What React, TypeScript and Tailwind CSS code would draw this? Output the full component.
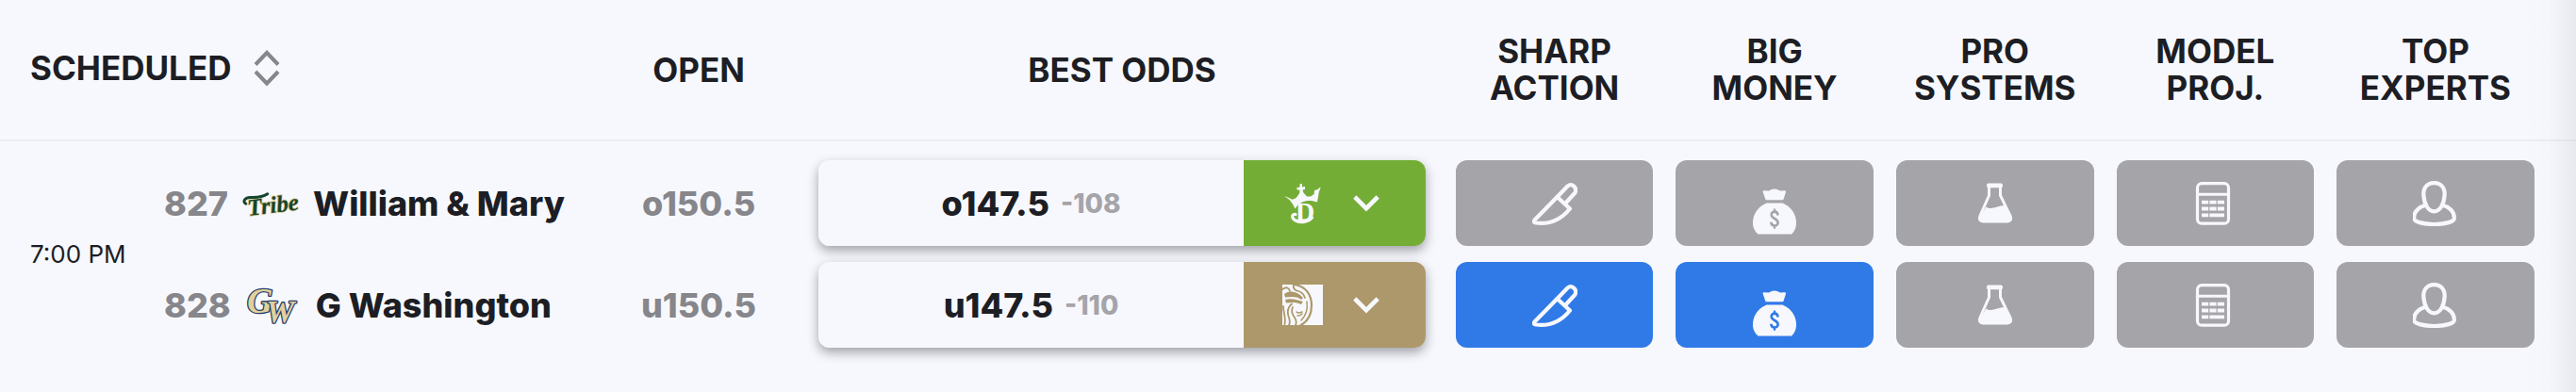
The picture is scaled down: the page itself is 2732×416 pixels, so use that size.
import type { ReactNode } from "react";

type IconProps = { className?: string };

function SortIcon() {
  return (
    <svg className="h-10 w-7" viewBox="0 0 28 40" fill="none" stroke="#86868b" strokeWidth="4" aria-hidden="true">
      <path d="M2 16.500 14 4 26 16.500M2 24 14 36.500 26 24" />
    </svg>
  );
}

function ChevronIcon() {
  return (
    <svg className="h-[18px] w-7" viewBox="0 0 28 18" fill="none" stroke="currentColor" strokeWidth="4.600" aria-hidden="true">
      <path d="M1.800 2 14 14.200 26.200 2" />
    </svg>
  );
}

function KnifeIcon({ className }: IconProps) {
  return (
    <svg className={className} viewBox="0 0 48 48" fill="none" stroke="currentColor" strokeWidth="4.200" strokeLinejoin="round" strokeLinecap="round" aria-hidden="true">
      <path d="M26.500 17 37.500 5.500C42 1.800 48 7 45.500 12.500L35 24" />
      <path d="M26.500 17 2.500 41.500C1.200 43.400 2 44.300 4 44.500C19 46.500 31 40.500 40 29.500Z" />
    </svg>
  );
}

function MoneyBagIcon({ className }: IconProps) {
  return (
    <svg className={className} viewBox="0 0 48 50" fill="currentColor" aria-hidden="true">
      <path d="M11.500 4.300Q11.600 3.300 12.800 3.300L18 3.500Q23.500-.6 30 3.500L34.800 3.300Q36.200 3.400 36 4.700L33.500 12.500Q33.200 13.200 32.400 13.200H15.500Q14.600 13.200 14.300 12.400Z" />
      <path d="M15.500 16.500H32.500C42 20.500 47.500 29 47 39C46.600 43.500 44.800 47 42 49.500H6.500C3.500 47 1.500 43.500 1 39C.5 29 6 20.500 15.500 16.500Z" />
      <g fill="none" stroke="var(--tile)" strokeWidth="2.600">
        <path d="M27.500 29.500C27.300 24.200 20.600 24.600 20.700 29C20.800 33.600 27.600 32.400 27.600 37.200C27.600 41.600 20.500 41.800 20.300 36.800" />
        <path d="M24 22.500V26.500M24 39.500V43.800" strokeWidth="2.200" />
      </g>
    </svg>
  );
}

function FlaskIcon({ className }: IconProps) {
  return (
    <svg className={className} viewBox="0 0 48 48" aria-hidden="true">
      <path d="M17.500 6.500V15.500L7.800 37.500C6.600 41 8 43 11 43H37C40 43 41.400 41 40.200 37.500L29.500 15.500V6.500" fill="none" stroke="currentColor" strokeWidth="3" />
      <rect x="15" y="2.500" width="17" height="4.800" rx="1.800" fill="currentColor" />
      <path d="M14.500 27.500C20 31.500 27 26 33.500 26L40.200 38C41 41.500 40 43.300 37 43.300H11C8 43.300 7 41.500 8 38Z" fill="currentColor" />
    </svg>
  );
}

function CalculatorIcon({ className }: IconProps) {
  return (
    <svg className={className} viewBox="0 0 48 48" aria-hidden="true">
      <rect x="5.500" y="2.700" width="33" height="42.500" rx="4.500" fill="none" stroke="currentColor" strokeWidth="3.200" />
      <path d="M5.500 14.300H38.500" stroke="currentColor" strokeWidth="3" />
      <path d="M10 22.600H34M10 29.500H34" stroke="currentColor" strokeWidth="3.800" strokeDasharray="7.200 1.200" />
      <path d="M10 36.400H17.200M18.400 36.400H34" stroke="currentColor" strokeWidth="3.800" />
    </svg>
  );
}

function PersonIcon({ className }: IconProps) {
  return (
    <svg className={className} viewBox="0 0 48 48" fill="none" stroke="currentColor" strokeWidth="4.200" aria-hidden="true">
      <path d="M22.500 2.100C30.500 2.100 34.300 8 33.600 15.500C32.900 24.500 29 32.300 22.500 32.300C16 32.300 12.100 24.500 11.400 15.500C10.700 8 14.500 2.100 22.500 2.100Z" />
      <path d="M14 25.500C6.500 27.500 1.200 32.500 1.200 38.500V40C1.200 43 10 46 22.500 46C35 46 43.800 43 43.800 40V38.500C43.800 32.500 38.500 27.500 31 25.500" />
    </svg>
  );
}

function TribeLogo() {
  return (
    <svg className="h-10 w-[60px] overflow-visible" viewBox="0 0 60 40" aria-hidden="true">
      <g transform="rotate(-7 30 20)">
        <text x="5" y="30" fontFamily="Liberation Serif, serif" fontSize="25" fontWeight="700" fontStyle="italic" fill="#15452f" stroke="#d9c78a" strokeWidth="1.600" paintOrder="stroke">
          Tribe
        </text>
        <path d="M4 17C0 14 4 10 10 11C16 12 22 12.500 28 9.500" fill="none" stroke="#15452f" strokeWidth="3" strokeLinecap="round" />
      </g>
    </svg>
  );
}

function GwLogo() {
  return (
    <svg className="h-10 w-[60px] overflow-visible" viewBox="0 0 60 40" aria-hidden="true">
      <g fontFamily="Liberation Serif, serif" fontWeight="700" fontStyle="italic" fill="#e3cf9b" stroke="#1f3f6e" strokeWidth="2.600" strokeLinejoin="round" paintOrder="stroke">
        <text x="2" y="28" fontSize="38">G</text>
        <text x="22" y="38" fontSize="34">W</text>
      </g>
    </svg>
  );
}

function DraftKingsLogo() {
  return (
    <svg className="h-11 w-[43px] overflow-visible" viewBox="0 0 43 44" fill="currentColor" aria-hidden="true">
      <path d="M2.200 14 6.500 15.800 10.500 17.800 14 16.500 17 13 18.400 10.500 18.300 7.500 15.500 7.600V4.800L18.300 5 18.700 1 21 1.200 21 4.600 24 4V7L21.400 7.400 22.400 10.500 26 14.500 30 14.500 33.600 12 34 8 37 7.200 40.800 4.200 38.800 10 37 20.500C29 17.500 19 18.500 13.500 27.500L11 22.500 7.500 18Z" />
      <text x="14" y="40" fontFamily="Liberation Serif, serif" fontSize="28" fontWeight="700">D</text>
      <path d="M14 33.500C10.500 32.500 9.500 36.500 12.500 39C17 43 27 42.500 31.500 37" fill="none" stroke="currentColor" strokeWidth="3.200" strokeLinecap="round" />
    </svg>
  );
}

function BetMgmLogo() {
  return (
    <svg className="size-[43px]" viewBox="0 0 43 43" fill="none" stroke="#ac986b" strokeLinecap="round" aria-hidden="true">
      <rect width="43" height="43" fill="#f7f8fd" stroke="none" />
      <path d="M13 0C25 2 31 11 31 22C31 32 27.500 39 19 43.500" strokeWidth="2.200" />
      <path d="M0 5C4 2 7 3 8 7M12 0C11 4 13 6 17 7C21 8 23 11 24 14" strokeWidth="1.800" />
      <path d="M2 10C8 5 17 8 22 14L20 16C15 12 9 13 3 13.500ZM3 16C10 14 17 17 22 18L20 21C16 18.500 9 18.500 4 19.500Z" fill="#ac986b" stroke="none" />
      <path d="M10 20.500C5 25 5 30 7 35C8 38 8 41 7 43M1 23C1 30 4 34 2.500 42M11 24C9 29 11 32 13 35C15 38 15 41 14 43" strokeWidth="1.800" />
      <path d="M15 29C17 31 19 30 21 29M16 33C18 33.500 20 32 21 31M26 18C27 25 25 33 20 38" strokeWidth="1.500" />
    </svg>
  );
}

const signals: { title: [string, string]; Icon: (props: IconProps) => ReactNode; icon: string; active: [boolean, boolean] }[] = [
  { title: ["SHARP", "ACTION"], Icon: KnifeIcon, icon: "size-12", active: [false, true] },
  { title: ["BIG", "MONEY"], Icon: MoneyBagIcon, icon: "h-[50px] w-12 self-end mb-3", active: [false, true] },
  { title: ["PRO", "SYSTEMS"], Icon: FlaskIcon, icon: "size-12", active: [false, false] },
  { title: ["MODEL", "PROJ."], Icon: CalculatorIcon, icon: "size-12", active: [false, false] },
  { title: ["TOP", "EXPERTS"], Icon: PersonIcon, icon: "size-12", active: [false, false] },
];

const teams = [
  { rotation: "827", name: "William & Mary", Logo: TribeLogo, open: "o150.5", best: "o147.5", juice: "-108", book: "DraftKings", BookLogo: DraftKingsLogo, bookColor: "bg-[#74ad36]" },
  { rotation: "828", name: "G Washington", Logo: GwLogo, open: "u150.5", best: "u147.5", juice: "-110", book: "BetMGM", BookLogo: BetMgmLogo, bookColor: "bg-[#ac986b]" },
];

const headCell = "border-b-2 border-[#ecedf2] font-bold";

export default function App() {
  return (
    <div className="relative min-h-screen bg-[#f7f8fd] font-['Inter',sans-serif] text-[#1d1e24]">
      <table className="w-full table-fixed border-separate border-spacing-0">
        <colgroup>
          <col className="w-[23.2%]" />
          <col className="w-[7.85%]" />
          <col className="w-[25.02%]" />
          {signals.map((s) => (
            <col key={s.title[0]} className="w-[8.55%]" />
          ))}
          <col />
        </colgroup>
        <thead>
          <tr className="h-[150px] text-[35px] leading-[39px]">
            <th scope="col" className={`${headCell} pb-1 pl-8 text-left`}>
              <button type="button" className="flex items-center gap-6">
                SCHEDULED
                <SortIcon />
              </button>
            </th>
            <th scope="col" className={headCell}>OPEN</th>
            <th scope="col" className={headCell}>BEST ODDS</th>
            {signals.map(({ title }) => (
              <th key={title[0]} scope="col" className={headCell}>
                {title[0]}
                <br />
                {title[1]}
              </th>
            ))}
            <td className={headCell} />
          </tr>
        </thead>
        <tbody>
          <tr className="text-[36px] font-extrabold">
            <td className="py-5 pl-8">
              <div className="flex items-center">
                <time className="w-[142px] text-[26px] font-normal">7:00 PM</time>
                <div className="flex flex-col gap-[17px]">
                  {teams.map(({ rotation, name, Logo }) => (
                    <div key={rotation} className="flex h-[91px] items-center gap-[15px] whitespace-nowrap">
                      <span className="text-[#86868b]">{rotation}</span>
                      <Logo />
                      <span>{name}</span>
                    </div>
                  ))}
                </div>
              </div>
            </td>
            <td className="py-5">
              <div className="flex flex-col gap-[17px] text-[#86868b]">
                {teams.map((t) => (
                  <div key={t.open} className="flex h-[91px] items-center justify-center">{t.open}</div>
                ))}
              </div>
            </td>
            <td className="px-5 py-5">
              <div className="flex flex-col gap-[17px]">
                {teams.map(({ best, juice, book, BookLogo, bookColor }) => (
                  <div key={best} className="flex h-[91px] overflow-hidden rounded-xl shadow-[0_5px_12px_rgba(20,20,30,0.38)]">
                    <button type="button" className="flex w-[70%] items-center justify-center gap-3 bg-[#f7f8fd]">
                      {best}
                      <span className="text-[28px] text-[#a5a4a9]">{juice}</span>
                    </button>
                    <button type="button" aria-label={book} className={`flex w-[30%] items-center justify-center gap-8 pr-2 text-[#f7f8fd] ${bookColor}`}>
                      <BookLogo />
                      <ChevronIcon />
                    </button>
                  </div>
                ))}
              </div>
            </td>
            {signals.map(({ title, Icon, icon, active }) => (
              <td key={title[0]} className="px-3 py-5">
                <div className="flex flex-col gap-[17px]">
                  {active.map((on, i) => (
                    <button
                      key={teams[i].rotation}
                      type="button"
                      aria-label={`${title[0]} ${title[1]} ${teams[i].name}`}
                      className={`flex h-[91px] items-center justify-center rounded-xl text-[#f7f8fd] ${on ? "bg-[#307ae8] [--tile:#307ae8]" : "bg-[#a5a4a9] [--tile:#a5a4a9]"}`}
                    >
                      <Icon className={icon} />
                    </button>
                  ))}
                </div>
              </td>
            ))}
            <td />
          </tr>
        </tbody>
      </table>
      <div className="pointer-events-none absolute inset-y-0 right-0 w-14 bg-linear-to-r from-transparent via-black/1 to-black/6" />
    </div>
  );
}
